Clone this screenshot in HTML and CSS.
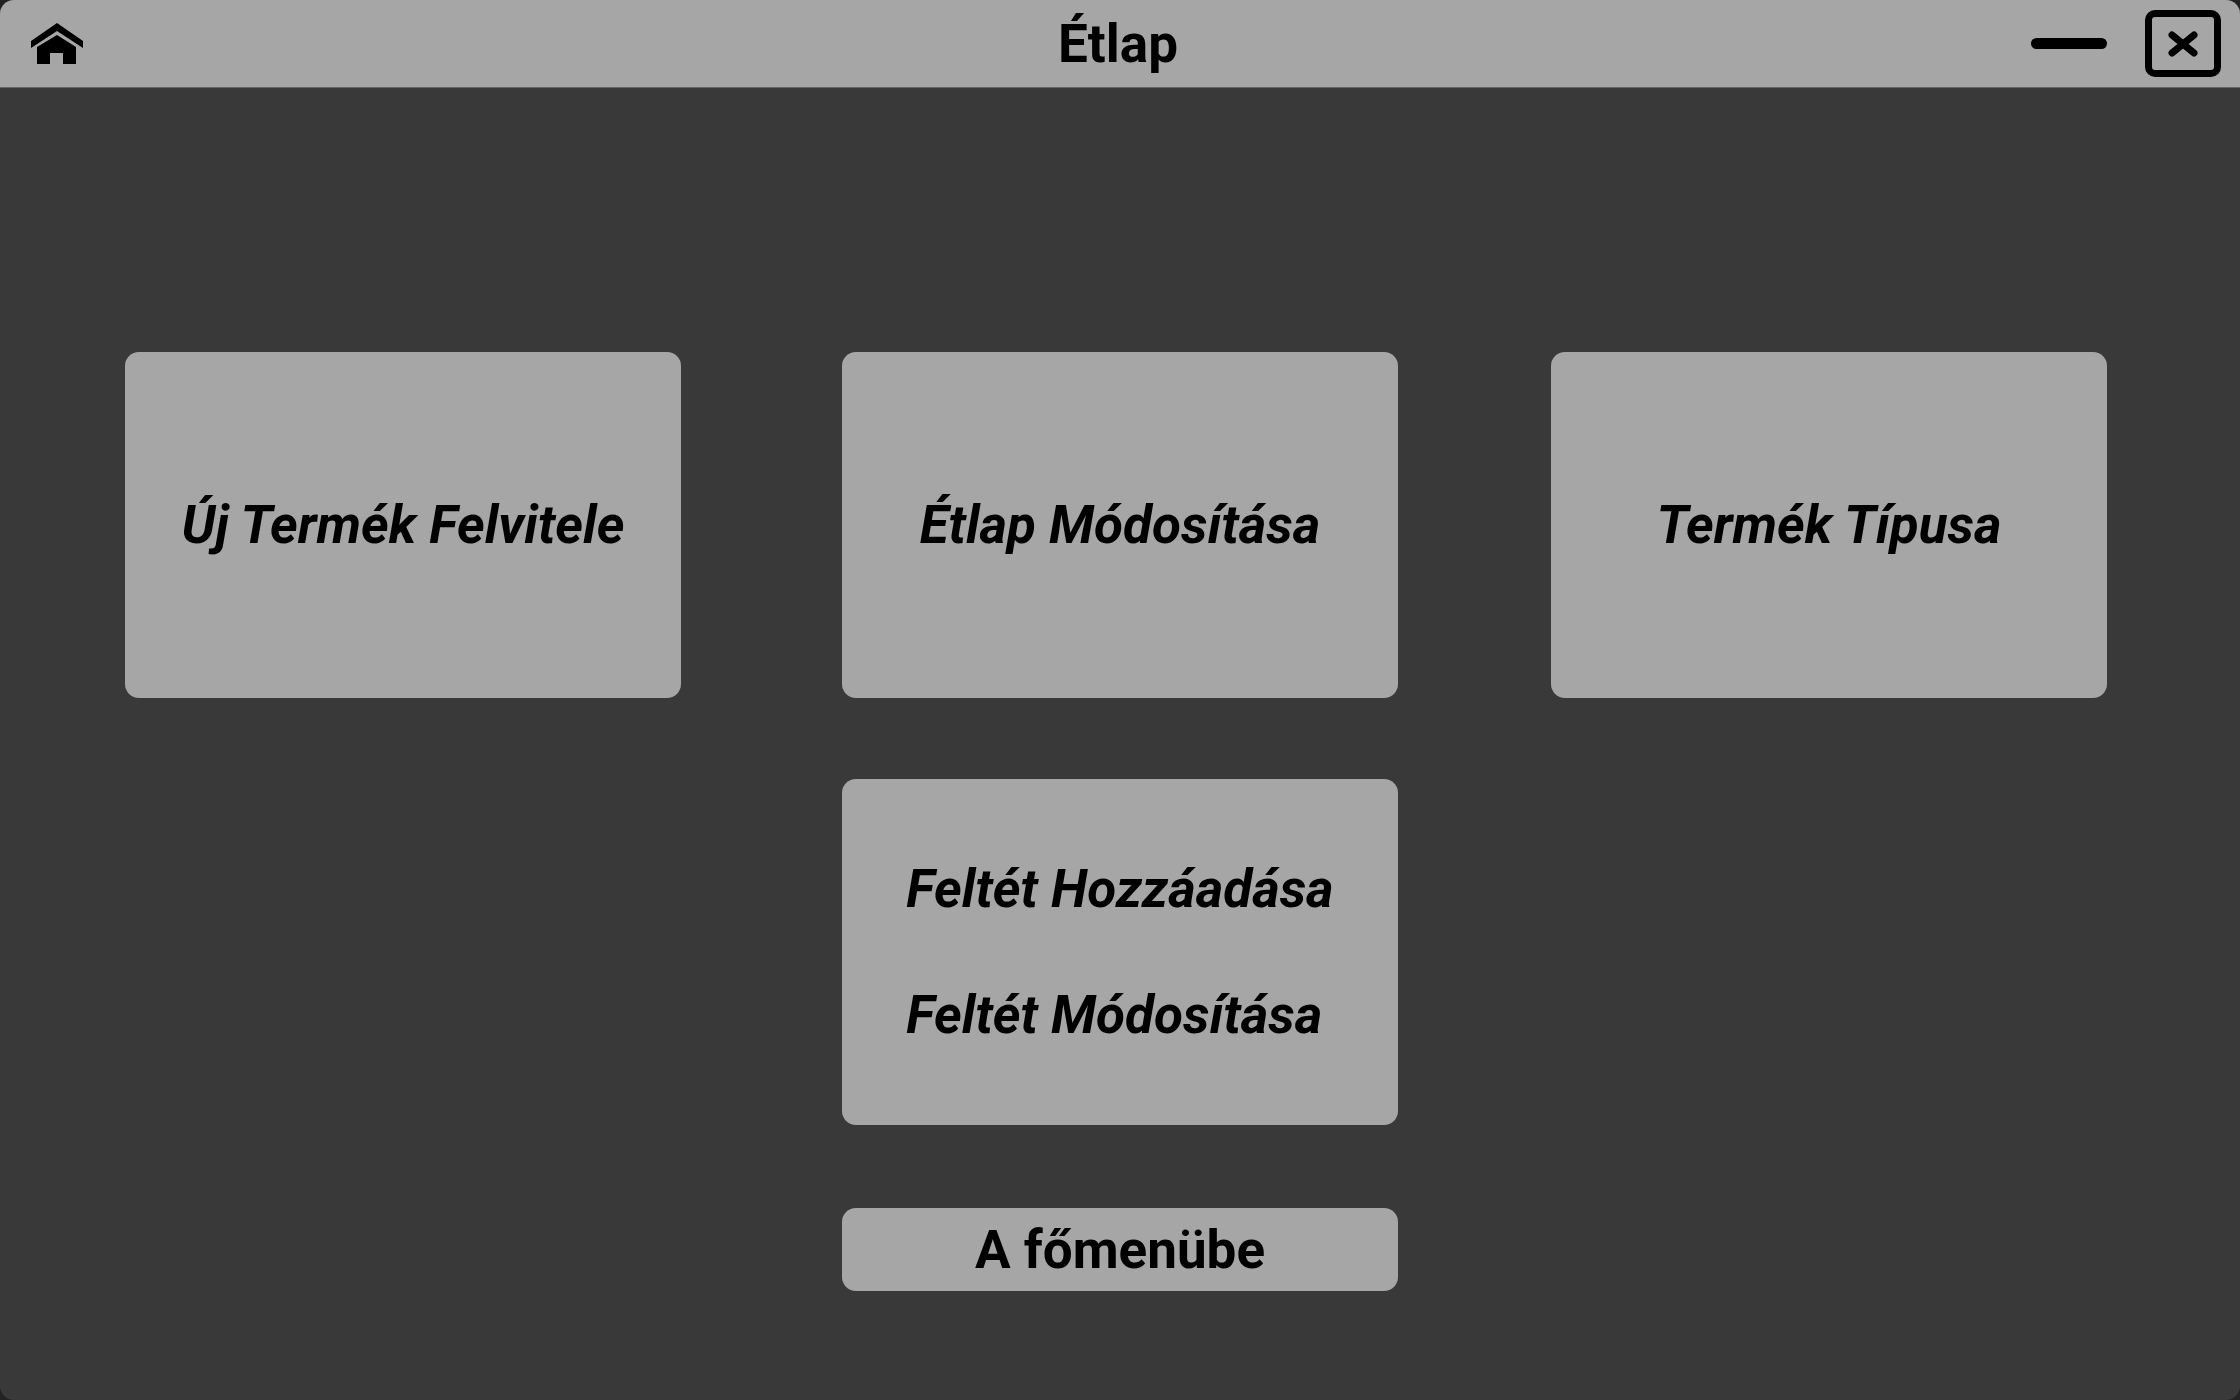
FILE: index.html
```html
<!DOCTYPE html>
<html lang="hu">
<head>
  <meta charset="utf-8">
  <meta name="viewport" content="width=device-width, initial-scale=1">
  <title>Étlap</title>
  <link rel="stylesheet" href="styles.css">
</head>
<body>
  <div class="window">
    <header class="titlebar">
      <div class="titlebar-start">
        <a class="home" href="#" aria-label="Főmenü">
          <svg width="54" height="42" viewBox="0 0 54 42" aria-hidden="true">
            <path d="M27 0 53 18v7L27 8 1 25v-7z"/>
            <path d="M27 12 46 24v17H33V30H20v11H7V24z"/>
          </svg>
        </a>
      </div>
      <h1 class="title">Étlap</h1>
      <div class="titlebar-end">
        <button class="minimize" type="button" aria-label="Kis méret"></button>
        <button class="close" type="button" aria-label="Bezárás">
          <svg width="32" height="28" viewBox="0 0 32 28" aria-hidden="true">
            <path d="M5 5 27 23M27 5 5 23"/>
          </svg>
        </button>
      </div>
    </header>
    <main class="menu">
      <button class="card" type="button">Új Termék Felvitele</button>
      <button class="card center" type="button">Étlap Módosítása</button>
      <button class="card end" type="button">Termék Típusa</button>
      <section class="card center" aria-label="Feltét">
        <div class="card-links">
          <a href="#">Feltét Hozzáadása</a>
          <a href="#">Feltét Módosítása</a>
        </div>
      </section>
      <button class="back center" type="button">A főmenübe</button>
    </main>
  </div>
</body>
</html>
```
FILE: styles.css
```css
* {
  box-sizing: border-box;
}

body {
  margin: 0;
  background: #222;
  color: #000;
  font-family: Roboto, "Liberation Sans", sans-serif;
  font-size: 53px;
  font-weight: 700;
  line-height: 64px;
}

button {
  padding: 0;
  border: 0;
  color: inherit;
  font: inherit;
  cursor: pointer;
}

a {
  color: inherit;
  text-decoration: none;
}

svg {
  display: block;
}

.window {
  min-height: 100vh;
  overflow: hidden;
  border-radius: 14px;
  background: #393939;
}

.titlebar {
  display: grid;
  grid-template-columns: 1fr auto 1fr;
  align-items: center;
  height: 88px;
  padding: 0 19px 0 15px;
  border-bottom: 1px solid #666;
  background: #a6a6a6;
}

.title {
  margin: 0;
  font: inherit;
}

.titlebar-start,
.titlebar-end {
  display: flex;
  align-items: center;
}

.titlebar-start {
  padding-left: 15px;
}

.titlebar-end {
  justify-content: flex-end;
  gap: 38px;
}

.minimize {
  width: 76px;
  height: 11px;
  border-radius: 6px;
  background: #000;
}

.close {
  display: grid;
  place-items: center;
  width: 76px;
  height: 67px;
  border: 7px solid #000;
  border-radius: 10px;
  background: none;
}

.close path {
  fill: none;
  stroke: #000;
  stroke-width: 7;
  stroke-linecap: round;
}

.menu {
  display: grid;
  grid-template-columns: 556fr 161fr 556fr 153fr 556fr;
  row-gap: 81px;
  padding: 264px 133px 108px 125px;
}

.card {
  display: grid;
  place-items: center;
  min-height: 346px;
  border-radius: 14px;
  background: #a6a6a6;
  font-style: italic;
}

.center {
  grid-column: 3;
}

.end {
  grid-column: 5;
}

.card-links {
  display: grid;
  gap: 62px;
}

.back {
  height: 83px;
  margin-top: 2px;
  border-radius: 14px;
  background: #a6a6a6;
}
```
